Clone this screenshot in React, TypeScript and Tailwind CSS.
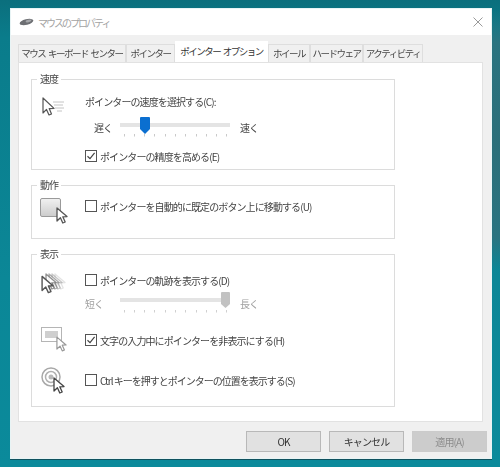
const cursor = "M1 1 L1 14 L4.4 10.8 L6.8 16 L9.2 15 L6.8 9.8 L11 9.6 Z";

function Cursor({ className, stroke = "#555" }: { className: string; stroke?: string }) {
  return (
    <svg viewBox="0 0 12 17" className={className}>
      <path d={cursor} fill="#fff" stroke={stroke} strokeWidth="1.3" strokeLinejoin="round" />
    </svg>
  );
}

function Check({ checked = false }: { checked?: boolean }) {
  return (
    <span className="flex h-[12px] w-[12px] shrink-0 items-center justify-center border border-[#555] bg-white">
      {checked && (
        <svg viewBox="0 0 10 10" className="h-[10px] w-[10px]">
          <path d="M1.5 5.2 L4 7.6 L8.6 1.8" fill="none" stroke="#444" strokeWidth="1.2" />
        </svg>
      )}
    </span>
  );
}

function Ticks({ color }: { color: string }) {
  return (
    <svg viewBox="0 0 110 3" className="h-[3px] w-[110px]">
      {[4, 14, 24, 34, 45, 55, 65, 76, 86, 96, 106].map((x) => (
        <rect key={x} x={x} y="0" width="1" height="2.5" fill={color} />
      ))}
    </svg>
  );
}

function Group({ title, className, children }: { title: string; className: string; children: React.ReactNode }) {
  return (
    <section className={`relative border border-[#dcdcdc] ${className}`}>
      <span className="absolute -top-[8px] left-[5px] bg-white px-[3px] text-[10px] leading-[14px] text-[#444]">
        {title}
      </span>
      {children}
    </section>
  );
}

function Tab({ label, width, active }: { label: string; width: string; active?: boolean }) {
  return (
    <div
      className={
        active
          ? `relative z-10 -mt-[3px] flex h-[21px] items-center justify-center whitespace-nowrap bg-white text-[9.5px] tracking-[-1.5px] [word-spacing:2px] text-[#333] ${width}`
          : `flex h-[18px] items-center justify-center whitespace-nowrap border border-b-0 border-[#dedede] bg-[#f0f0f0] text-[9.5px] tracking-[-1.5px] [word-spacing:2px] text-[#444] ${width}`
      }
    >
      {label}
    </div>
  );
}

export default function App() {
  return (
    <div
      className="h-[467px] w-[500px] overflow-hidden bg-[#0a8799] bg-[radial-gradient(ellipse_70px_130px_at_500px_140px,#2b6f79_0%,#2a7480_75%,transparent_100%),linear-gradient(180deg,#0b6f7d_0%,#0a7c8b_8%,#0b8797_60%,#0b8a9b_100%)] pl-[10px] pt-[8px]"
      style={{ fontFamily: '"Noto Sans CJK JP", "Liberation Sans", sans-serif' }}
    >
      <div className="flex h-[451px] w-[482px] flex-col border border-[#e8f4f5] bg-[#f0f0f0] text-[10px] tracking-[-0.9px] text-[#444] shadow-[0_1px_0_#10515e] blur-[0.45px]">
        <header className="flex h-[26px] shrink-0 items-center justify-between bg-white pl-[8px] pr-[8px]">
          <div className="flex items-center gap-[4px]">
            <svg viewBox="0 0 15 8" className="h-[8px] w-[15px]">
              <ellipse cx="7.5" cy="4" rx="7" ry="2.8" transform="rotate(-14 7.5 4)" fill="#6d6f73" />
              <ellipse cx="9.5" cy="3" rx="3" ry="1.2" transform="rotate(-14 9.5 3)" fill="#a4a6a9" />
            </svg>
            <span className="text-[10px] tracking-[-2px] text-[#a3a3a3]">マウスのプロパティ</span>
          </div>
          <svg viewBox="0 0 10 10" className="h-[10px] w-[10px]">
            <path d="M0.5 0.5 L9.5 9.5 M9.5 0.5 L0.5 9.5" stroke="#9a9a9a" strokeWidth="1" fill="none" />
          </svg>
        </header>

        <div className="ml-[7px] mt-[9px] flex h-[18px] shrink-0 items-end">
          <Tab label="マウス キーボード センター" width="w-[108px]" />
          <Tab label="ポインター" width="w-[49px]" />
          <Tab label="ポインター オプション" width="w-[93px]" active />
          <Tab label="ホイール" width="w-[42px]" />
          <Tab label="ハードウェア" width="w-[53px]" />
          <Tab label="アクティビティ" width="w-[60px]" />
        </div>

        <main className="ml-[7px] flex h-[360px] w-[465px] shrink-0 flex-col gap-[15px] border border-[#e2e2e2] bg-white pl-[12px] pt-[16px]">
          <Group title="速度" className="h-[91px] w-[364px]">
            <div className="flex pl-[10px] pt-[15px]">
              <svg viewBox="0 0 24 20" className="mt-[2px] h-[20px] w-[24px] shrink-0">
                <path d="M11 5 H22 M12 8 H21 M13 11 H22 M15 14 H20" stroke="#c4c4c4" strokeWidth="1" fill="none" />
                <path d="M1 1 L1 16 L4.5 12.4 L7 18 L9.5 17 L7.2 11.6 L12 11.4 Z" fill="#fff" stroke="#555" strokeWidth="1.2" strokeLinejoin="round" />
              </svg>
              <div className="ml-[19px] flex flex-col">
                <div className="h-[14px] leading-[14px]">ポインターの速度を選択する(C):</div>
                <div className="ml-[9px] mt-[9px] flex h-[19px] items-start">
                  <span className="w-[26px] pt-[3px] leading-[14px]">遅く</span>
                  <div className="flex w-[110px] flex-col">
                    <div className="relative mt-[5px] h-[4px] bg-[#e4e4e4]">
                      <svg viewBox="0 0 10 17" className="absolute -top-[6px] left-[20px] h-[17px] w-[10px]">
                        <path d="M0 1 Q0 0 1 0 H9 Q10 0 10 1 V12 L5 17 L0 12 Z" fill="#0b6fd0" />
                      </svg>
                    </div>
                    <div className="mt-[7px]"><Ticks color="#c9c9c9" /></div>
                  </div>
                  <span className="ml-[10px] pt-[3px] leading-[14px]">速く</span>
                </div>
                <label className="mt-[12px] flex h-[14px] items-center gap-[3px]">
                  <Check checked />
                  <span>ポインターの精度を高める(E)</span>
                </label>
              </div>
            </div>
          </Group>

          <Group title="動作" className="h-[54px] w-[364px]">
            <div className="flex pl-[8px] pt-[13px]">
              <div className="relative -mt-[1px] h-[27px] w-[28px] shrink-0">
                <div className="h-[19px] w-[21px] rounded-[2px] border border-[#9a9a9a] bg-[linear-gradient(180deg,#f0f0f0,#cdcdcd)]" />
                <Cursor className="absolute left-[16px] top-[9px] h-[17px] w-[12px]" />
              </div>
              <label className="ml-[17px] flex h-[14px] items-center gap-[3px]">
                <Check />
                <span>ポインターを自動的に既定のボタン上に移動する(U)</span>
              </label>
            </div>
          </Group>

          <Group title="表示" className="h-[153px] w-[364px]">
            <div className="flex flex-col pl-[9px] pt-[18px]">
              <div className="flex h-[43px]">
                <div className="relative h-[24px] w-[28px] shrink-0">
                  {["left-[13px] opacity-20", "left-[10px] opacity-40", "left-[7px] opacity-60", "left-[4px] opacity-80"].map((c) => (
                    <Cursor key={c} className={`absolute top-0 h-[17px] w-[12px] ${c}`} stroke="#777" />
                  ))}
                  <Cursor className="absolute left-0 top-[2px] h-[19px] w-[13px]" />
                </div>
                <div className="ml-[16px] flex flex-col">
                  <label className="flex h-[14px] items-center gap-[3px]">
                    <Check />
                    <span>ポインターの軌跡を表示する(D)</span>
                  </label>
                  <div className="mt-[10px] flex items-start text-[#a0a0a0]">
                    <span className="w-[35px] leading-[14px]">短く</span>
                    <div className="flex w-[110px] flex-col">
                      <div className="relative mt-[1px] h-[4px] bg-[#e4e4e4]">
                        <svg viewBox="0 0 9 16" className="absolute -top-[6px] right-0 h-[16px] w-[9px]">
                          <path d="M0 1 Q0 0 1 0 H8 Q9 0 9 1 V12 L4.5 16 L0 12 Z" fill="#c2c2c2" />
                        </svg>
                      </div>
                      <div className="mt-[8px]"><Ticks color="#d0d0d0" /></div>
                    </div>
                    <span className="ml-[10px] leading-[14px]">長く</span>
                  </div>
                </div>
              </div>

              <div className="mt-[11px] flex h-[26px]">
                <div className="relative h-[26px] w-[28px] shrink-0">
                  <div className="flex h-[15px] w-[21px] items-center justify-center border border-[#b5b5b5] bg-white">
                    <div className="h-[7px] w-[13px] bg-[#cfcfcf]" />
                  </div>
                  <Cursor className="absolute left-[15px] top-[9px] h-[16px] w-[11px]" stroke="#999" />
                </div>
                <label className="ml-[16px] mt-[6px] flex h-[14px] items-center gap-[3px]">
                  <Check checked />
                  <span>文字の入力中にポインターを非表示にする(H)</span>
                </label>
              </div>

              <div className="mt-[14px] flex h-[30px]">
                <div className="relative h-[30px] w-[28px] shrink-0">
                  <svg viewBox="0 0 20 20" className="h-[20px] w-[20px]">
                    <circle cx="10" cy="10" r="9" fill="#fff" stroke="#a8a8a8" strokeWidth="1.5" />
                    <circle cx="10" cy="10" r="5.5" fill="#fff" stroke="#b0b0b0" strokeWidth="1.5" />
                    <circle cx="10" cy="10" r="2.5" fill="#b8b8b8" />
                  </svg>
                  <Cursor className="absolute left-[12px] top-[10px] h-[17px] w-[12px]" stroke="#444" />
                </div>
                <label className="ml-[16px] mt-[6px] flex h-[14px] items-center gap-[3px]">
                  <Check />
                  <span className="tracking-[-1px]">Ctrl キーを押すとポインターの位置を表示する(S)</span>
                </label>
              </div>
            </div>
          </Group>
        </main>

        <footer className="mt-[9px] flex justify-end gap-[8px] pr-[4px]">
          <button className="h-[21px] w-[75px] border border-[#b8b8b8] bg-[#e1e1e1] text-[#333]">OK</button>
          <button className="h-[21px] w-[75px] border border-[#b8b8b8] bg-[#e1e1e1] text-[#333]">キャンセル</button>
          <button className="h-[21px] w-[75px] border border-[#cbcbcb] bg-[#cccccc] text-[#8c8c8c]">適用(A)</button>
        </footer>
      </div>
    </div>
  );
}
